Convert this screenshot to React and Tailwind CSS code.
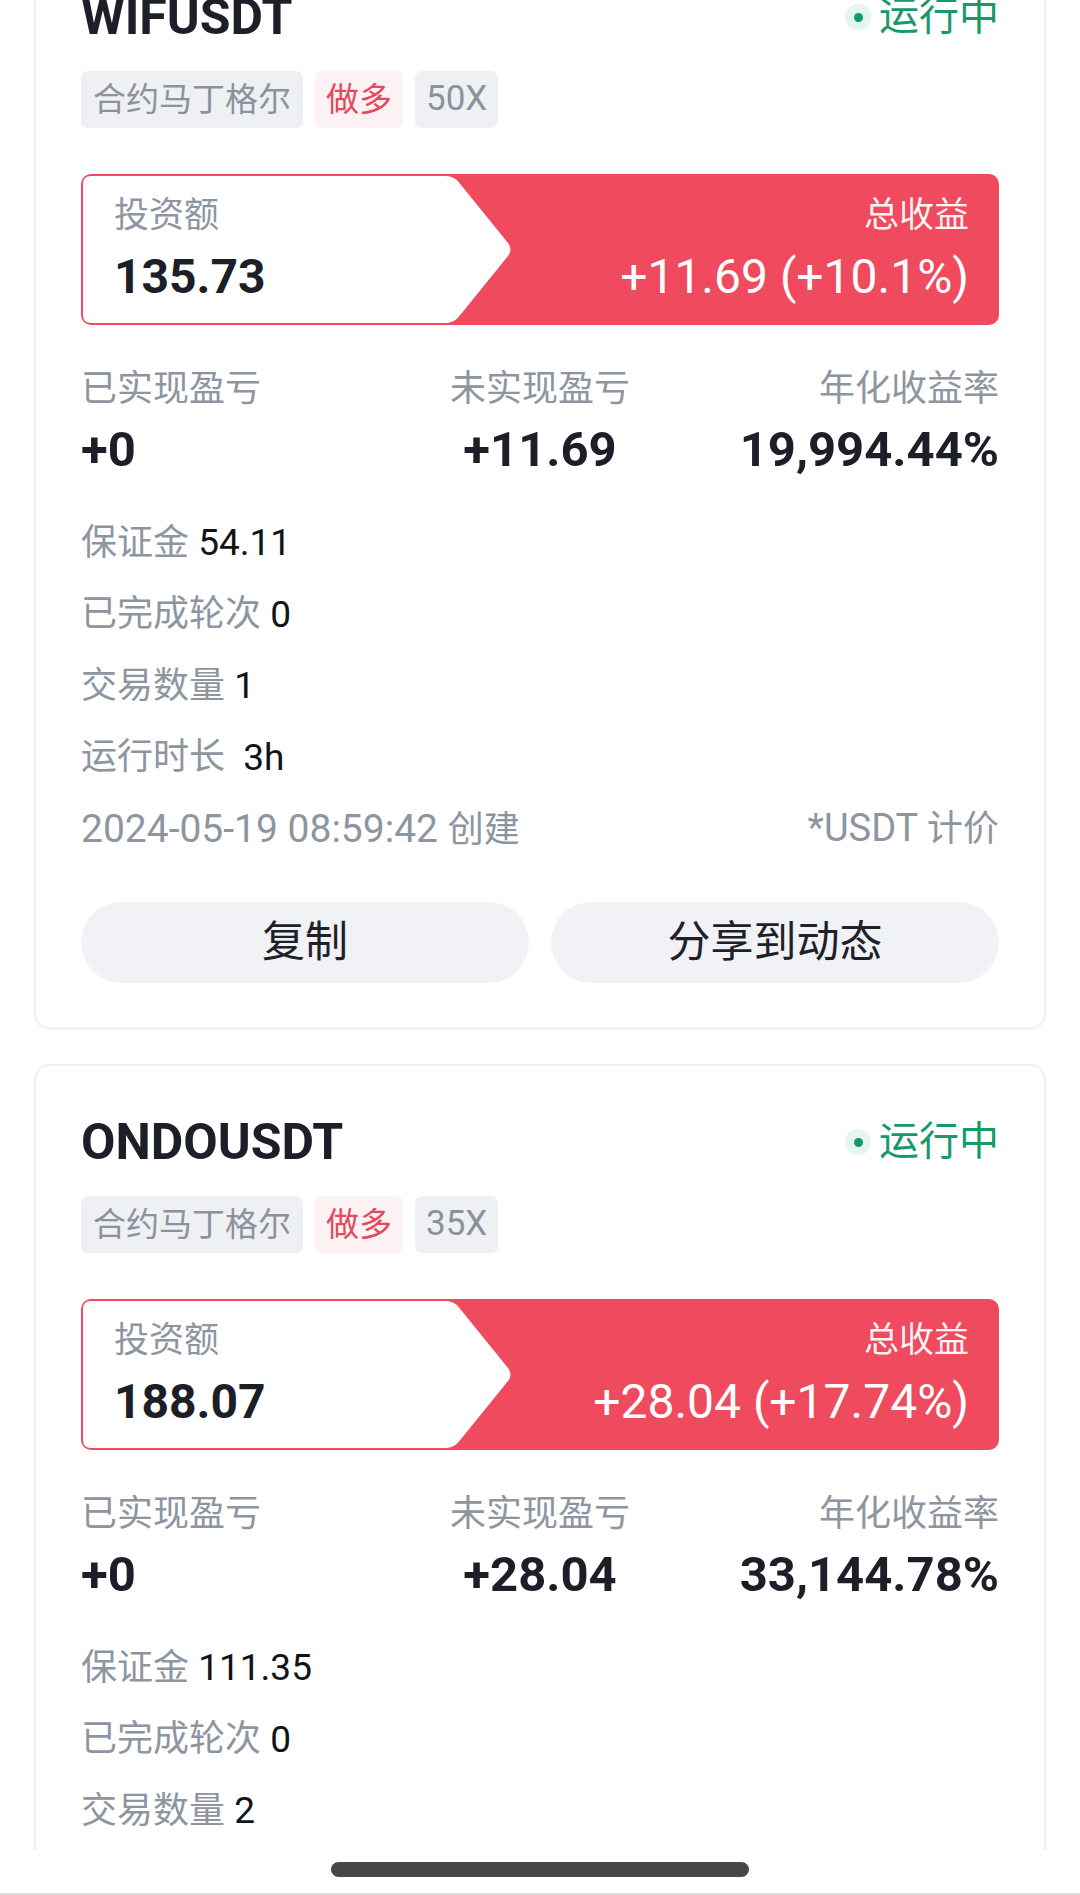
import React from 'react';

const FONT = { fontFamily: 'Roboto, "Noto Sans CJK SC", sans-serif' };

const bots = [
    {
        symbol: 'WIFUSDT',
        leverage: '50X',
        invest: '135.73',
        profit: '+11.69 (+10.1%)',
        realized: '+0',
        unrealized: '+11.69',
        apr: '19,994.44%',
        margin: '54.11',
        rounds: '0',
        trades: '1',
        runtime: '3h',
        created: '2024-05-19 08:59:42',
    },
    {
        symbol: 'ONDOUSDT',
        leverage: '35X',
        invest: '188.07',
        profit: '+28.04 (+17.74%)',
        realized: '+0',
        unrealized: '+28.04',
        apr: '33,144.78%',
        margin: '111.35',
        rounds: '0',
        trades: '2',
        runtime: '3h',
        created: '2024-05-19 08:59:42',
    },
];

export default function App() {
    return (
        <div className="w-[1080px] h-[1895px] bg-white flex flex-col overflow-hidden" style={FONT}>

            {/* ─── Scroll area ─────────────────────────────── */}
            <div className="h-[1850px] overflow-hidden">
                <div className="mt-[-61px] flex flex-col gap-[35px]">
                    {bots.map((b) => (
                        <BotCard key={b.symbol} bot={b} />
                    ))}
                </div>
            </div>

            {/* ─── Gesture bar ─────────────────────────────── */}
            <div className="flex-1 bg-white flex justify-center border-b-2 border-[#dcdcdc]">
                <div className="mt-[12px] w-[418px] h-[15px] rounded-full bg-[#474747]" />
            </div>
        </div>
    );
}

function BotCard({ bot }) {
    return (
        <div className="mx-[34px] rounded-[16px] border-2 border-[#eeeff2] bg-white px-[45px] pt-[44px] pb-[44px] shadow-[0_1px_2px_rgba(0,0,0,0.04)]">

            {/* Header */}
            <div className="h-[64px] flex items-center justify-between">
                <span className="text-[50px] leading-[64px] font-bold text-[#1c1f27]">
                    {bot.symbol}
                </span>
                <div className="flex items-center gap-[8px]">
                    <span className="w-[26px] h-[26px] rounded-full bg-[#e4f6ee] flex items-center justify-center">
                        <span className="w-[9px] h-[9px] rounded-full bg-[#129b66]" />
                    </span>
                    <span className="text-[40px] leading-[64px] text-[#17996a]">运行中</span>
                </div>
            </div>

            {/* Tags */}
            <div className="mt-[22px] flex gap-[12px]">
                <span className="h-[57px] px-[12px] rounded-[7px] bg-[#eef0f4] text-[#8c929d] text-[33px] flex items-center">
                    合约马丁格尔
                </span>
                <span className="h-[57px] px-[11px] rounded-[7px] bg-[#fdf2f3] text-[#e34a5f] text-[33px] flex items-center">
                    做多
                </span>
                <span className="h-[57px] px-[11px] rounded-[7px] bg-[#eef0f4] text-[#8c929d] text-[35px] flex items-center">
                    {bot.leverage}
                </span>
            </div>

            {/* Invest / Profit box */}
            <div className="mt-[46px] relative h-[151px] rounded-[10px] bg-[#f04a5f] overflow-hidden">
                <svg className="absolute left-0 top-0" width="440" height="151" viewBox="0 0 440 151">
                    <path
                        d="M10 2 H365 Q373 2 378 8.5 L427 69 Q432 75.5 427 82 L378 142.5 Q373 149 365 149 H10 Q2 149 2 141 V10 Q2 2 10 2 Z"
                        fill="#ffffff"
                    />
                </svg>
                <div className="relative flex justify-between pl-[33px] pr-[30px] pt-[20px]">
                    <div className="flex flex-col items-start">
                        <span className="text-[35px] leading-[44px] text-[#8e95a1]">投资额</span>
                        <span className="mt-[11px] text-[48px] leading-[56px] font-bold text-[#1c1f27]">
                            {bot.invest}
                        </span>
                    </div>
                    <div className="flex flex-col items-end">
                        <span className="text-[35px] leading-[44px] text-white/95">总收益</span>
                        <span className="mt-[11px] text-[48px] leading-[56px] text-white">
                            {bot.profit}
                        </span>
                    </div>
                </div>
            </div>

            {/* Stats */}
            <div className="mt-[40px] grid grid-cols-3">
                <Stat label="已实现盈亏" value={bot.realized} align="text-left" />
                <Stat label="未实现盈亏" value={bot.unrealized} align="text-center" />
                <Stat label="年化收益率" value={bot.apr} align="text-right" />
            </div>

            {/* Details */}
            <div className="mt-[29px] flex flex-col text-[36px]">
                <Row label="保证金" value={bot.margin} />
                <Row label="已完成轮次" value={bot.rounds} />
                <Row label="交易数量" value={bot.trades} />
                <Row label="运行时长 " value={bot.runtime} />
                <div className="h-[71.5px] flex items-center justify-between text-[#8e95a1]">
                    <span>
                        <span className="text-[39px]">{bot.created} </span>创建
                    </span>
                    <span>
                        <span className="text-[38px]">*USDT </span>计价
                    </span>
                </div>
            </div>

            {/* Actions */}
            <div className="mt-[37.5px] grid grid-cols-2 gap-[22px]">
                <button className="h-[81px] rounded-full bg-[#f1f2f5] text-[43px] text-[#1f2129]">
                    复制
                </button>
                <button className="h-[81px] rounded-full bg-[#f1f2f5] text-[43px] text-[#1f2129]">
                    分享到动态
                </button>
            </div>
        </div>
    );
}

function Stat({ label, value, align }) {
    return (
        <div className={`flex flex-col ${align}`}>
            <span className="text-[36px] leading-[48px] text-[#8e95a1]">{label}</span>
            <span className="mt-[9px] text-[49px] leading-[56px] font-bold text-[#1c1f27]">{value}</span>
        </div>
    );
}

function Row({ label, value }) {
    return (
        <div className="h-[71.5px] flex items-center whitespace-pre">
            <span className="text-[#8e95a1]">{label}</span>
            <span className="text-[37px] text-[#111319]"> {value}</span>
        </div>
    );
}
